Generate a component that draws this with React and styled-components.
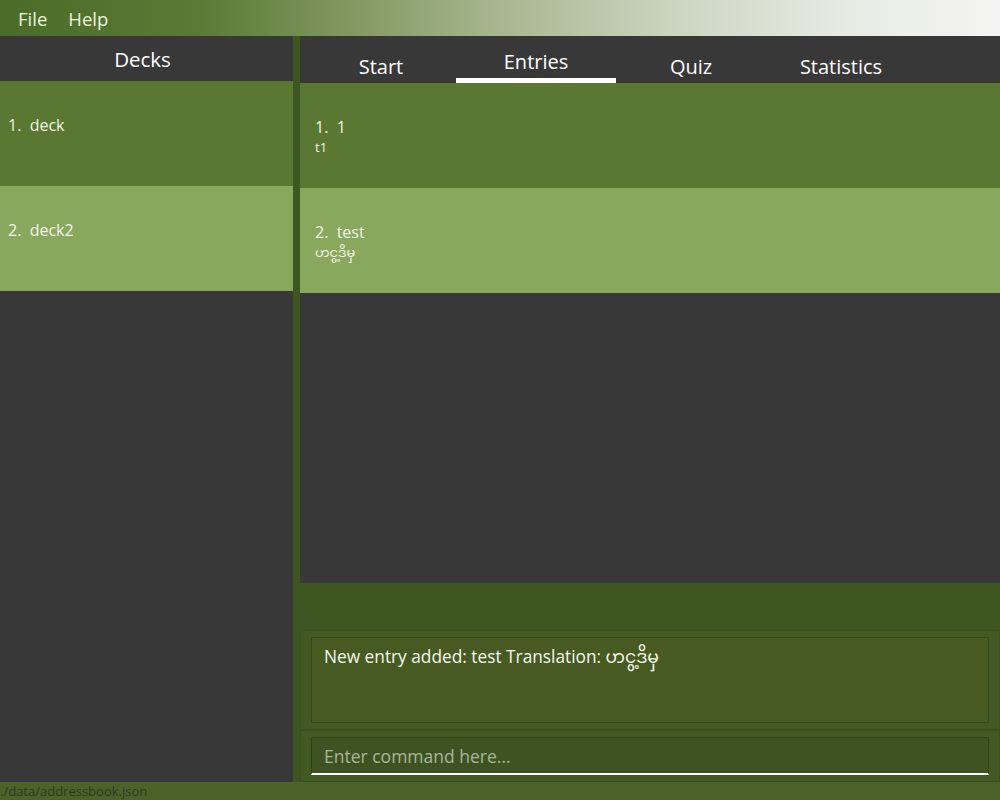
import React from "react";
import styled, { createGlobalStyle } from "styled-components";

const Global = createGlobalStyle`
  html, body { margin: 0; padding: 0; }
  body { font-family: "Open Sans", "Noto Sans", "DejaVu Sans", sans-serif; }
  #root { width: 1000px; height: 800px; }
`;

const Window = styled.div`
  width: 1000px;
  height: 800px;
  display: flex;
  flex-direction: column;
  background: #3e5622;
  overflow: hidden;
`;

const MenuBar = styled.div`
  height: 36px;
  display: flex;
  align-items: center;
  padding-left: 18px;
  gap: 21px;
  background: linear-gradient(90deg, #4b6b28 0%, #5a7a36 20%, #7a9258 32%, #a3b38a 48%, #cdd6c2 68%, #e8ebe4 85%, #f4f4f4 100%);
`;

const MenuItem = styled.span`
  color: #eaf3dc;
  font-size: 18.5px;
`;

const Main = styled.div`
  flex: 1;
  display: flex;
  gap: 7px;
  min-height: 0;
`;

const LeftPanel = styled.div`
  width: 293px;
  background: #383838;
  display: flex;
  flex-direction: column;
`;

const PanelHeader = styled.div`
  height: 45px;
  display: flex;
  align-items: center;
  justify-content: center;
  padding-right: 8px;
  color: #ffffff;
  font-size: 20.5px;
`;

const Card = styled.div`
  height: 105px;
  box-sizing: border-box;
  padding: ${p => p.$top}px 0 0 ${p => p.$left}px;
  background: ${p => (p.$alt ? "#89a85e" : "#5a7832")};
  display: flex;
  flex-direction: column;
`;

const CardTitle = styled.div`
  color: #f0f5e6;
  font-size: 16px;
  line-height: 20px;
  white-space: pre;
`;

const CardSub = styled.div`
  color: #f0f5e6;
  font-size: 13px;
  line-height: 20px;
  font-family: "Open Sans", "Noto Sans Myanmar", "Noto Sans", "Padauk", sans-serif;
`;

const RightPanel = styled.div`
  flex: 1;
  display: flex;
  flex-direction: column;
`;

const TabBar = styled.div`
  height: 47px;
  background: #383838;
  display: flex;
  padding-left: 6px;
`;

const Tab = styled.div`
  width: ${p => p.$w}px;
  box-sizing: border-box;
  display: flex;
  align-items: flex-end;
  justify-content: center;
  color: #ffffff;
  font-size: 20px;
  line-height: 22px;
  padding-bottom: ${p => (p.$active ? 5 : 0)}px;
  border-bottom: ${p => (p.$active ? "5px solid #ffffff" : "5px solid transparent")};
`;

const EntryList = styled.div`
  height: 500px;
  background: #383838;
  display: flex;
  flex-direction: column;
`;

const Spacer = styled.div`
  height: 47px;
`;

const OuterBox = styled.div`
  height: ${p => p.$h}px;
  box-sizing: border-box;
  border: 1px solid #3a5020;
  background: #435924;
  padding: 6px 10px 6px 10px;
  display: flex;
`;

const ResultBox = styled.div`
  flex: 1;
  box-sizing: border-box;
  border: 1px solid #34491b;
  background: #465a22;
  color: #f4f8ec;
  font-size: 17.3px;
  line-height: 24px;
  padding: 7px 12px;
  font-family: "Open Sans", "Noto Sans Myanmar", "Noto Sans", sans-serif;
`;

const CommandInput = styled.div`
  flex: 1;
  box-sizing: border-box;
  border: 1px solid #2e4316;
  border-bottom: 2px solid #ffffff;
  background: #3f5322;
  color: #a9b59a;
  font-size: 17.5px;
  display: flex;
  align-items: center;
  padding-left: 12px;
`;

const StatusBar = styled.div`
  height: 18px;
  background: #4b6229;
  color: #2d3a1e;
  font-size: 13px;
  line-height: 18px;
  padding-left: 0;
`;

const decks = ["deck", "deck2"];
const entries = [
  { word: "1", tr: "t1" },
  { word: "test", tr: "ဟငွ့ဒိမှ" },
];
const tabs = [
  { label: "Start", w: 150 },
  { label: "Entries", w: 160, active: true },
  { label: "Quiz", w: 150 },
  { label: "Statistics", w: 150 },
];

export default function App() {
  return (
    <Window>
      <Global />
      <MenuBar>
        <MenuItem>File</MenuItem>
        <MenuItem>Help</MenuItem>
      </MenuBar>
      <Main>
        <LeftPanel>
          <PanelHeader>Decks</PanelHeader>
          {decks.map((d, i) => (
            <Card key={d} $alt={i % 2 === 1} $top={34} $left={8}>
              <CardTitle>{`${i + 1}.  ${d}`}</CardTitle>
            </Card>
          ))}
        </LeftPanel>
        <RightPanel>
          <TabBar>
            {tabs.map(t => (
              <Tab key={t.label} $w={t.w} $active={t.active}>{t.label}</Tab>
            ))}
          </TabBar>
          <EntryList>
            {entries.map((e, i) => (
              <Card key={e.word} $alt={i % 2 === 1} $top={34} $left={15}>
                <CardTitle>{`${i + 1}.  ${e.word}`}</CardTitle>
                <CardSub>{e.tr}</CardSub>
              </Card>
            ))}
          </EntryList>
          <Spacer />
          <OuterBox $h={100}>
            <ResultBox>New entry added: test Translation: ဟငွ့ဒိမှ</ResultBox>
          </OuterBox>
          <OuterBox $h={52}>
            <CommandInput>Enter command here...</CommandInput>
          </OuterBox>
        </RightPanel>
      </Main>
      <StatusBar>./data/addressbook.json</StatusBar>
    </Window>
  );
}
